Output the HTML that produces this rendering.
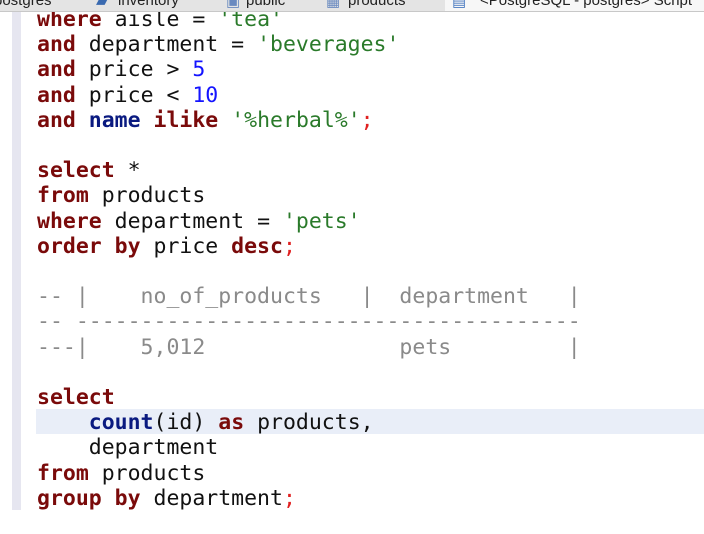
<html><head><style>
body{margin:0;width:704px;height:534px;background:#fff;overflow:hidden;position:relative}
.bar{position:absolute;left:12px;top:10px;width:9px;height:500px;background:#e6e6f0}
.hl{position:absolute;left:36px;top:409px;width:668px;height:25px;background:#e9eef8}
pre{position:absolute;left:37px;top:7px;margin:0;font-family:"DejaVu Sans Mono",monospace;font-size:21.5px;line-height:25.2px;color:#111}
.k{color:#7a0a0a;font-weight:bold}.n{color:#0a1a80;font-weight:bold}
.s{color:#2a7a2a}.d{color:#1414ff}.r{color:#e02020}.c{color:#8a8a8a}
.tabs{position:absolute;left:0;top:0;width:704px;height:11px;background:#e4e4e4;border-bottom:1px solid #c8c8c8;font-family:"Liberation Sans",sans-serif;font-size:15px;color:#222;overflow:hidden}
.tabs span{position:absolute;top:-8px}
.tw{position:absolute;left:445px;top:0;width:259px;height:11px;background:#f7f7f7}
</style></head><body>
<div class="bar"></div><div class="hl"></div>
<pre><span class="k">where</span> aisle = <span class="s">'tea'</span>
<span class="k">and</span> department = <span class="s">'beverages'</span>
<span class="k">and</span> price &gt; <span class="d">5</span>
<span class="k">and</span> price &lt; <span class="d">10</span>
<span class="k">and</span> <span class="n">name</span> <span class="k">ilike</span> <span class="s">'%herbal%'</span><span class="r">;</span>

<span class="k">select</span> *
<span class="k">from</span> products
<span class="k">where</span> department = <span class="s">'pets'</span>
<span class="k">order by</span> price <span class="k">desc</span><span class="r">;</span>

<span class="c">-- |    no_of_products   |  department   |</span>
<span class="c">-- ---------------------------------------</span>
<span class="c">---|    5,012               pets         |</span>

<span class="k">select</span>
    <span class="n">count</span>(id) <span class="k">as</span> products,
    department
<span class="k">from</span> products
<span class="k">group by</span> department<span class="r">;</span></pre>
<div class="tabs"><div class="tw"></div>
<span style="left:-6px">postgres</span><span style="left:96px;color:#3a6ab0">▰</span><span style="left:118px">inventory</span>
<span style="left:226px;color:#6a8ac0">▣</span><span style="left:246px">public</span>
<span style="left:326px;color:#6a8ac0">▦</span><span style="left:348px">products</span>
<span style="left:452px;color:#4a7ac0">▤</span><span style="left:480px">&lt;PostgreSQL - postgres&gt; Script</span></div>
</body></html>
